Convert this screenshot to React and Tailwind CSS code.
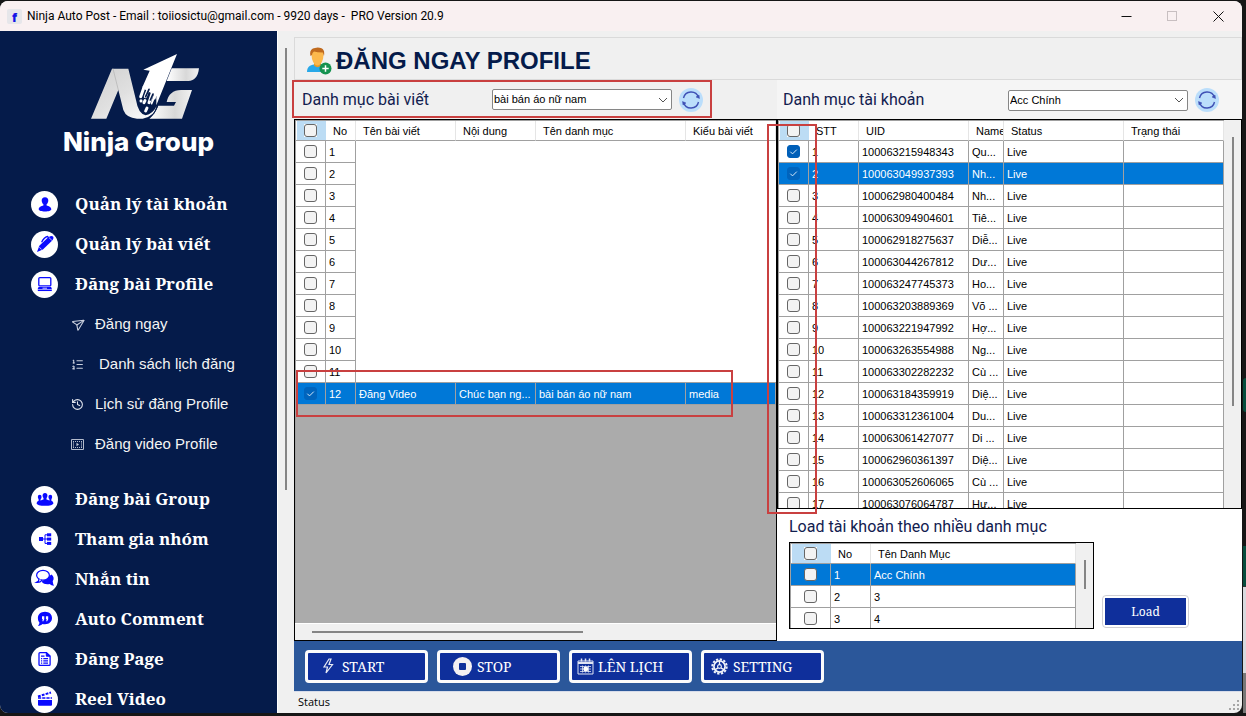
import React from 'react';
import { Send, ListOrdered, History } from 'lucide-react';

const posts = Array.from({ length: 11 }, (_, i) => i + 1);

const accounts = [
  ['100063215948343', 'Qu...', true],
  ['100063049937393', 'Nh...', true],
  ['100062980400484', 'Nh...'],
  ['100063094904601', 'Tiê...'],
  ['100062918275637', 'Diễ...'],
  ['100063044267812', 'Dư...'],
  ['100063247745373', 'Ho...'],
  ['100063203889369', 'Võ ...'],
  ['100063221947992', 'Hợ...'],
  ['100063263554988', 'Ng...'],
  ['100063302282232', 'Cù ...'],
  ['100063184359919', 'Diệ...'],
  ['100063312361004', 'Du...'],
  ['100063061427077', 'Di ...'],
  ['100062960361397', 'Diệ...'],
  ['100063052606065', 'Cù ...'],
  ['100063076064787', 'Hư...'],
];

const UI = "font-['Liberation_Sans',Arial,sans-serif]";

function Check({ label, checked = false, faint = false }) {
  return (
    <span className="grid size-[13px] place-items-center">
      <input
        type="checkbox"
        aria-label={label}
        defaultChecked={checked}
        className={
          'peer col-start-1 row-start-1 size-[13px] appearance-none rounded-[3px] border bg-[#f3f3f3] ' +
          (faint
            ? 'border-[#0062b8] checked:border-[#0064bd] checked:bg-[#0064bd]'
            : 'border-[#666666] checked:border-[#005fb8] checked:bg-[#005fb8]')
        }
      />
      <svg viewBox="0 0 13 13" className="pointer-events-none invisible col-start-1 row-start-1 size-[13px] peer-checked:visible" fill="none" stroke="#d6e8f8">
        <path d="M3.3 6.7 5.5 8.9 9.8 4.6" />
      </svg>
    </span>
  );
}

function HeadCheck({ label }) {
  return (
    <th className="h-[20px] border-b border-[#a0a0a0] bg-white p-0">
      <div className="ml-px flex h-[19px] items-center justify-center bg-[#bcdcf4] pr-[2px]">
        <span className="bg-white"><Check label={label} /></span>
      </div>
    </th>
  );
}

function Th({ children }) {
  return (
    <th className="h-[20px] overflow-hidden border-r border-b border-r-[#e5e5e5] border-b-[#a0a0a0] bg-white p-0 pl-[7px] text-left font-normal">
      {children}
    </th>
  );
}

function Td({ children, className = '' }) {
  return (
    <td className={'h-[22px] overflow-hidden border-r border-b border-[#a0a0a0] p-0 pl-[3px] ' + className}>
      {children}
    </td>
  );
}

function CheckCell(props) {
  return (
    <td className="h-[22px] border-r border-b border-[#a0a0a0] p-0">
      <div className="flex justify-center"><Check {...props} /></div>
    </td>
  );
}

function Combo({ id, value }) {
  return (
    <span className="grid w-[180px] items-center">
      <select id={id} className="col-start-1 row-start-1 h-[21px] appearance-none rounded-[2px] border border-[#868686] bg-white pl-px text-[11px] text-black">
        <option>{value}</option>
      </select>
      <svg viewBox="0 0 10 6" className="pointer-events-none col-start-1 row-start-1 mr-1 h-[6px] w-[10px] justify-self-end" fill="none" stroke="#555">
        <path d="M1 1l4 4 4-4" />
      </svg>
    </span>
  );
}

function Refresh() {
  return (
    <button aria-label="Refresh" className="block size-[24px]">
      <svg viewBox="0 0 48 48" className="size-[24px]">
        <circle cx="24" cy="24" r="24" fill="#bbdefb" />
        <g fill="none" stroke="#3f51b5" strokeWidth="2.8">
          <path d="M9 20a15.500 15.500 0 0 1 30-1" />
          <path d="M39 28a15.500 15.500 0 0 1-30 1" />
        </g>
        <path d="M34 18l7 3-1-7zM14 30l-7-3 1 7z" fill="#3f51b5" stroke="#3f51b5" />
      </svg>
    </button>
  );
}

function Logo() {
  return (
    <svg viewBox="261 156 342 207" className="h-[69px] w-[114px]" aria-hidden="true">
      <defs>
        <linearGradient id="steel" x1="0" y1="0" x2="1" y2="1">
          <stop offset="0" stopColor="#cfcfcf" />
          <stop offset=".5" stopColor="#e0e0e0" />
          <stop offset="1" stopColor="#fff" />
        </linearGradient>
        <linearGradient id="steelG" x1="0" y1="0" x2="1" y2="0">
          <stop offset="0" stopColor="#fff" />
          <stop offset=".6" stopColor="#d8d8d8" />
          <stop offset="1" stopColor="#f2f2f2" />
        </linearGradient>
      </defs>
      <path d="M270 356 333 206H382L405 300Q412 342 434 346Q455 342 467 318Q460 350 425 356H408Q376 354 367 330L352 270 316 356Z" fill="url(#steel)" />
      <path d="M336 206 352 270" fill="none" stroke="#b0b0b0" strokeWidth="2" />
      <path d="M528 162 427 209 446 212 424 262 434 270 466 288 466 316Z" fill="#fff" />
      <g stroke="#fff" strokeWidth="9" strokeLinecap="round">
        <path d="M429 262 419 290M442 266 433 290M455 276 444 308M466 276 454 310M420 302V303M432 302 429 308M438 324 434 333" />
      </g>
      <path d="M444 268 434 290M456 282 448 300M462 300 455 316" stroke="#051b4a" strokeWidth="5" strokeLinecap="round" />
      <path d="M512 205H594Q590 242 562 243H497Z" fill="url(#steelG)" />
      <path d="M540 270H573L543 356H445Q462 342 472 317H519L525 306H497Q504 271 540 270Z" fill="url(#steelG)" />
      <path d="M470 318Q462 342 442 357" fill="none" stroke="#051b4a" strokeWidth="3" />
    </svg>
  );
}

function Disc({ children }) {
  return (
    <svg viewBox="0 0 27 27" className="size-[27px] shrink-0" aria-hidden="true">
      <circle cx="13.5" cy="13.5" r="13.5" fill="#fff" />
      {children}
    </svg>
  );
}

const B = '#0a0aff';

const icons = {
  user: (
    <Disc>
      <path d="M14 6.2c2.200 0 3.400 1.500 3.300 3.500-.1 1.500-.8 2.800-1.700 3.600v1.300c2 .6 4.700 1.500 4.700 3.700 0 1.400-2.800 2.200-6.300 2.200s-6.300-.8-6.300-2.200c0-2.200 2.700-3.100 4.700-3.700v-1.300c-.9-.8-1.600-2.100-1.700-3.600-.1-2 1.100-3.500 3.300-3.500z" fill={B} />
    </Disc>
  ),
  pen: (
    <Disc>
      <path d="M17.300 6.200 21 9.800 11.900 18.500 6 21 8.300 14.800Z" fill={B} />
      <path d="M17.800 6Q20.800 4.300 22 5.600T21.300 9.500Z" fill={B} />
      <path d="M10.600 11.200Q13 6.300 16.400 5.500L17.800 6.800" fill="none" stroke={B} strokeWidth="1.300" />
      <path d="M8.300 16.200 10.600 18.400" stroke="#fff" strokeWidth=".7" />
    </Disc>
  ),
  laptop: (
    <Disc>
      <rect x="7.800" y="6.600" width="12" height="8.300" rx="1" fill="none" stroke={B} strokeWidth="1.300" />
      <path d="M7.500 16H20.100L21 18.200H6.600Z" fill={B} />
      <path d="M11.500 17.200H16" stroke="#fff" strokeWidth=".8" />
      <path d="M6.800 19.400H20.800" stroke={B} strokeWidth="1.300" />
    </Disc>
  ),
  group: (
    <Disc>
      <g fill={B}>
        <ellipse cx="14" cy="9.600" rx="2.400" ry="2.700" />
        <ellipse cx="8.700" cy="11" rx="1.900" ry="2.200" />
        <ellipse cx="19.300" cy="11" rx="1.900" ry="2.200" />
        <path d="M12.500 11h3v2.400q2.200.3 2.900 1.300v-2h2v2q2 .5 2 2.500c0 1.600-3.600 2.600-8.400 2.600s-8.400-1-8.400-2.600q0-2 2-2.500v-2h2v2q.700-1 2.900-1.300z" />
      </g>
    </Disc>
  ),
  tree: (
    <Disc>
      <g fill={B}>
        <rect x="8" y="11" width="4" height="4" />
        <rect x="16" y="7.300" width="4.200" height="3" />
        <rect x="16" y="11.600" width="4.200" height="3" />
        <rect x="16" y="15.900" width="4.200" height="3" />
      </g>
      <path d="M16 8.800H14V17.400H16M12 13H16" fill="none" stroke={B} />
    </Disc>
  ),
  chat: (
    <Disc>
      <path d="M20.500 8.500q3.600 3 1.200 6.700.2 2.400 1.300 4.600-2.700-.2-4.400-1.700-5.200 1-8.200-2.300z" fill={B} />
      <ellipse cx="12" cy="9.300" rx="6.400" ry="4.900" fill="#fff" stroke={B} strokeWidth="1.200" />
      <path d="M8 13Q8 15.500 5.500 16.400 9 17 11 14.200" fill="#fff" stroke={B} strokeWidth="1.200" />
    </Disc>
  ),
  quote: (
    <Disc>
      <path d="M14 5.800c4.400 0 7 2.800 7 6.200s-2.600 6.200-7 6.200c-.9 0-1.800-.1-2.500-.3-1.100 1-2.600 1.900-4.600 2 .9-1 1.500-2.300 1.500-3.500C7.300 15.300 6.900 13.700 6.900 12c0-3.400 2.700-6.200 7.100-6.200z" fill={B} />
      <path d="M11 10.200h2.300v3l-1.200 2.200-.8-.3.600-1.900H11zM14.900 10.200h2.300v3L16 15.400l-.8-.3.600-1.900h-.9z" fill="#fff" />
    </Disc>
  ),
  doc: (
    <Disc>
      <path d="M8 7.500Q8 6.600 9 6.600H15.500L19.100 10V18.500Q19.100 19.400 18.200 19.400H9Q8 19.400 8 18.500Z" fill="none" stroke={B} strokeWidth="1.300" />
      <path d="M15.300 6.600V10.200H19" fill={B} stroke={B} />
      <path d="M10 10.200H13.500M10 12.700H11.200M12.300 12.700H17M10 14.900H11.200M12.300 14.900H17M10 17.100H11.200M12.300 17.100H17" stroke={B} strokeWidth="1.200" />
    </Disc>
  ),
  clap: (
    <Disc>
      <path d="M7 13.900H21V18.700Q21 19.800 20 19.800H8Q7 19.800 7 18.700Z" fill={B} />
      <path d="M7 12.100H21" stroke={B} strokeWidth="1.500" strokeDasharray="3.200 1" />
      <path d="M7 10.500 20 6.500" stroke={B} strokeWidth="2" strokeDasharray="2.800 1.200" />
    </Disc>
  ),
};

function NavItem({ icon, children }) {
  return (
    <a href="#" className="flex h-[40px] items-center gap-[17px] pl-[31px] font-['Noto_Serif','DejaVu_Serif_Condensed','DejaVu_Serif',serif] text-[17px] font-bold whitespace-nowrap text-white">
      {icons[icon]}
      {children}
    </a>
  );
}

function SubItem({ icon, children }) {
  return (
    <a href="#" className="flex h-[40px] items-center gap-[11px] pl-[71px] text-[15px] whitespace-nowrap text-[#f4f4f4]">
      {icon}
      {children}
    </a>
  );
}

function FilmIcon() {
  return (
    <svg viewBox="0 0 13 11" className="h-[11px] w-[13px]" fill="none" stroke="#b4bccd">
      <path d="M.5.5h12v10H.5z" />
      <path d="M2 2.500h9M2 8.500h9" strokeDasharray="1 1" />
      <path d="M2.500 2v7M10.500 2v7" strokeWidth=".6" />
      <path d="M5.500 3.800v3.400L8 5.500z" fill="#c9cfdd" stroke="none" />
    </svg>
  );
}

function Tool({ icon, pad, children }) {
  return (
    <button className={'flex h-[33px] w-[123px] items-center rounded-[4px] border-[3px] border-[#fbfbfb] bg-[#0f2f9b] font-["Noto_Serif","DejaVu_Serif_Condensed","DejaVu_Serif",serif] text-[14px] whitespace-nowrap text-white ' + pad}>
      {icon}
      {children}
    </button>
  );
}

export default function App() {
  return (
    <div className={'flex h-screen bg-[#161616] pt-px pb-[3px] ' + UI}>
      <div className="flex min-w-0 flex-1 flex-col overflow-hidden rounded-lg bg-[#f0f0f0]">
        <header className="flex h-[30px] shrink-0 items-center bg-[#f9f0f1] pl-[7px]">
          <span className="grid size-[15px] place-items-center rounded-[2px] bg-[#e6e6ea] font-['Open_Sans',sans-serif] text-[12px] font-extrabold text-[#1414e6]">f</span>
          <h1 className="ml-[5px] font-['Roboto','Noto_Sans',sans-serif] text-[12px] whitespace-pre text-black">Ninja Auto Post - Email : toiiosictu@gmail.com - 9920 days -  PRO Version 20.9</h1>
          <div className="ml-auto flex items-center gap-[35px] pr-[18px]">
            <button aria-label="Minimize" className="grid size-[11px] place-items-center"><svg viewBox="0 0 11 11" className="size-[11px]" stroke="#111"><path d="M.5 5.500h10" /></svg></button>
            <button aria-label="Maximize" className="grid size-[11px] place-items-center"><svg viewBox="0 0 11 11" className="size-[11px]" fill="none" stroke="#c8bfc1"><rect x=".5" y=".5" width="9" height="9" /></svg></button>
            <button aria-label="Close" className="grid size-[11px] place-items-center"><svg viewBox="0 0 11 11" className="size-[11px]" stroke="#111"><path d="M.5.5l10 10M10.500.5l-10 10" /></svg></button>
          </div>
        </header>

        <div className="flex min-h-0 flex-1">
          <nav className="w-[277px] shrink-0 overflow-hidden bg-[#051b4a]">
            <div className="flex h-[153px] flex-col items-center pt-[21px]">
              <div className="pl-[12px]"><Logo /></div>
              <div className="mt-[3px] font-['Inter',sans-serif] text-[26px] leading-[36px] font-extrabold text-white">Ninja Group</div>
            </div>
            <NavItem icon="user">Quản lý tài khoản</NavItem>
            <NavItem icon="pen">Quản lý bài viết</NavItem>
            <NavItem icon="laptop">Đăng bài Profile</NavItem>
            <SubItem icon={<Send className="size-[13px] rotate-12 text-[#c9cfdd]" strokeWidth={2} />}>Đăng ngay</SubItem>
            <SubItem icon={<ListOrdered className="mr-1 size-[13px] text-[#c9cfdd]" strokeWidth={2} />}>Danh sách lịch đăng</SubItem>
            <SubItem icon={<History className="size-[13px] text-[#e3e6ee]" strokeWidth={2} />}>Lịch sử đăng Profile</SubItem>
            <SubItem icon={<FilmIcon />}>Đăng video Profile</SubItem>
            <div className="mt-[15px]">
              <NavItem icon="group">Đăng bài Group</NavItem>
              <NavItem icon="tree">Tham gia nhóm</NavItem>
              <NavItem icon="chat">Nhắn tin</NavItem>
              <NavItem icon="quote">Auto Comment</NavItem>
              <NavItem icon="doc">Đăng Page</NavItem>
              <NavItem icon="clap">Reel Video</NavItem>
            </div>
          </nav>
          <div className="w-[17px] shrink-0 border-l border-white pt-[17px] pl-[7px]">
            <div className="h-[442px] w-[2px] bg-[#858585]" />
          </div>

          <main className="flex min-w-0 flex-1 flex-col pt-[6px]">
            <div className="flex h-[43px] shrink-0 items-center border border-[#dadada] pl-[11px]">
              <svg viewBox="0 0 26 28" className="mt-1 h-[28px] w-[26px]" aria-hidden="true">
                <path d="M1 25c0-5 3-7 7-7.500h7c4 .5 6 3 6 7.500z" fill="#29a8e8" />
                <path d="M8 14h7v4.500q-3.500 3.500-7 0z" fill="#e59a28" />
                <path d="M5.500 7.500Q5.500 3 11.500 3T17.500 8L17 12Q15 18.500 11.500 18.500T6 12Z" fill="#fcb84c" />
                <path d="M4.500 9Q2.800 2 9 1Q12-.2 15.500 1.300T18 9L16.800 5.500Q11 5.500 8 4.500 6 5.500 6 8Z" fill="#c06a1e" />
                <circle cx="19.500" cy="21.500" r="6" fill="#15924f" />
                <path d="M19.500 18.300v6.400M16.300 21.500h6.400" stroke="#fff" strokeWidth="1.500" />
              </svg>
              <h2 className="mt-1 ml-[4px] text-[24px] leading-[28px] font-bold text-[#051b4a]">ĐĂNG NGAY PROFILE</h2>
            </div>

            <div className="flex min-h-0 flex-1">
              <section className="flex w-[483px] shrink-0 flex-col">
                <div className="relative flex h-[39px] shrink-0 items-center pl-[8px]">
                  <label htmlFor="post-cat" className="w-[190px] font-['Roboto','Liberation_Sans',sans-serif] text-[16px] text-[#12204f]">Danh mục bài viết</label>
                  <Combo id="post-cat" value="bài bán áo nữ nam" />
                  <div className="ml-[7px]"><Refresh /></div>
                  <div className="pointer-events-none absolute top-0 -left-[2px] z-10 h-[38px] w-[420px] border-2 border-[#c94040]" />
                </div>
                <div className="relative flex min-h-0 flex-1 flex-col border border-black">
                  <div className="min-h-0 flex-1 overflow-hidden border-t border-l border-[#a0a0a0] bg-[#ababab]">
                    <table className="w-full table-fixed border-separate border-spacing-0 text-[11px] leading-[14px] text-black">
                      <colgroup>
                        <col className="w-[30px]" /><col className="w-[30px]" /><col className="w-[100px]" /><col className="w-[80px]" /><col className="w-[150px]" /><col />
                      </colgroup>
                      <thead>
                        <tr>
                          <HeadCheck label="Select all posts" />
                          <Th>No</Th><Th>Tên bài viết</Th><Th>Nội dung</Th><Th>Tên danh mục</Th><Th>Kiểu bài viết</Th>
                        </tr>
                      </thead>
                      <tbody>
                        {posts.map((n) => (
                          <tr key={n} className="bg-white">
                            <CheckCell label={'Post ' + n} />
                            <Td>{n}</Td>
                            {n === 1 && <td colSpan={4} rowSpan={11} className="border-b border-[#a0a0a0] bg-white p-0" />}
                          </tr>
                        ))}
                        <tr className="bg-[#0078d7] text-white">
                          <CheckCell label="Post 12" checked faint />
                          <Td>12</Td><Td>Đăng Video</Td><Td>Chúc bạn ng...</Td><Td>bài bán áo nữ nam</Td><Td>media</Td>
                        </tr>
                      </tbody>
                    </table>
                  </div>
                  <div className="flex h-[17px] shrink-0 items-center border-t border-white bg-[#f0f0f0] pl-[17px]">
                    <div className="h-[2px] w-[271px] bg-[#858585]" />
                  </div>
                  <div className="pointer-events-none absolute top-[250px] left-px z-10 h-[47px] w-[437px] border-2 border-[#c94040]" />
                </div>
              </section>

              <section className="flex min-w-0 flex-1 flex-col bg-white">
                <div className="flex h-[39px] shrink-0 items-center bg-[#f5f5f5] pt-px pr-[23px] pl-[6px]">
                  <label htmlFor="acc-cat" className="mr-auto font-['Roboto','Liberation_Sans',sans-serif] text-[16px] text-[#12204f]">Danh mục tài khoản</label>
                  <Combo id="acc-cat" value="Acc Chính" />
                  <div className="ml-[7px]"><Refresh /></div>
                </div>
                <div className="relative flex min-h-0 flex-1">
                  <div className="flex min-w-0 flex-1 overflow-hidden border border-black">
                    <div className="min-w-0 flex-1 border-t border-l border-[#a0a0a0]">
                      <table className="w-full table-fixed border-separate border-spacing-0 text-[11px] leading-[14px] text-black">
                        <colgroup>
                          <col className="w-[30px]" /><col className="w-[50px]" /><col className="w-[110px]" /><col className="w-[35px]" /><col className="w-[120px]" /><col />
                        </colgroup>
                        <thead>
                          <tr>
                            <HeadCheck label="Select all accounts" />
                            <Th>STT</Th><Th>UID</Th><Th>Name</Th><Th>Status</Th><Th>Trạng thái</Th>
                          </tr>
                        </thead>
                        <tbody>
                          {accounts.map(([uid, name, on], i) => (
                            <tr key={uid} className={i === 1 ? 'bg-[#0078d7] text-white' : 'bg-white'}>
                              <CheckCell label={'Account ' + (i + 1)} checked={!!on} faint={i === 1} />
                              <Td>{i + 1}</Td><Td>{uid}</Td><Td className="whitespace-nowrap">{name}</Td><Td>Live</Td><Td />
                            </tr>
                          ))}
                        </tbody>
                      </table>
                    </div>
                    <div className="w-[17px] shrink-0 bg-[#f0f0f0] pt-[17px] pl-[8px]">
                      <div className="h-[269px] w-[2px] bg-[#858585]" />
                    </div>
                  </div>
                  <div className="pointer-events-none absolute top-[5px] -left-[10px] z-10 h-[390px] w-[50px] border-2 border-[#c94040]" />
                </div>
                <div className="shrink-0 pt-[6px] pb-[12px] pl-[12px]">
                  <h3 className="h-[27px] font-['Roboto','Liberation_Sans',sans-serif] text-[16px] leading-[24px] text-[#12204f]">Load tài khoản theo nhiều danh mục</h3>
                  <div className="flex items-end gap-[8px]">
                    <div className="flex h-[87px] w-[305px] overflow-hidden border border-black">
                      <div className="flex-1 border-t border-l border-[#a0a0a0]">
                        <table className="w-full table-fixed border-separate border-spacing-0 text-[11px] leading-[14px] text-black">
                          <colgroup><col className="w-[40px]" /><col className="w-[40px]" /><col /></colgroup>
                          <thead>
                            <tr><HeadCheck label="Select all categories" /><Th>No</Th><Th>Tên Danh Mục</Th></tr>
                          </thead>
                          <tbody>
                            {['Acc Chính', '3', '4'].map((c, i) => (
                              <tr key={c} className={i === 0 ? 'bg-[#0078d7] text-white' : 'bg-white'}>
                                <CheckCell label={'Category ' + c} /><Td>{i + 1}</Td><Td>{c}</Td>
                              </tr>
                            ))}
                          </tbody>
                        </table>
                      </div>
                      <div className="w-[17px] shrink-0 bg-[#f0f0f0] pt-[17px] pl-[8px]">
                        <div className="h-[29px] w-[2px] bg-[#858585]" />
                      </div>
                    </div>
                    <button className="mb-px h-[33px] w-[87px] rounded-[4px] border border-[#cfcfd4] bg-white p-[2px]">
                      <span className="flex h-full items-center justify-center bg-[#0f2f9b] font-['Noto_Serif','DejaVu_Serif_Condensed','DejaVu_Serif',serif] text-[12px] text-white">Load</span>
                    </button>
                  </div>
                </div>
              </section>
            </div>

            <div className="flex h-[50px] shrink-0 items-center gap-[9px] bg-[#2b579a] pl-[11px]">
              <Tool pad="pl-[13px] gap-[7px]" icon={<svg viewBox="0 0 14 16" className="h-[16px] w-[14px]" fill="none" stroke="#e8ebf5" strokeWidth="1.200"><path d="M8 1 3 9h3.500L5 15l6.500-8.500H8L10 1z" /></svg>}>START</Tool>
              <Tool pad="pl-[13px] gap-[5px]" icon={<svg viewBox="0 0 19 19" className="size-[19px]"><circle cx="9.500" cy="9.500" r="9.500" fill="#f4f0f2" /><rect x="6" y="6" width="7" height="7" rx="1" fill="#0f2f9b" /></svg>}>STOP</Tool>
              <Tool pad="pl-[5px] gap-[4px]" icon={<svg viewBox="0 0 17 17" className="size-[17px]" fill="none" stroke="#e0e4f2"><path d="M1 3h15v13H1z" /><path d="M1 5h15" strokeWidth="2" /><path d="M4.500.5v3M8.500.5v3M12.500.5v3" strokeWidth="1.500" /><path d="M3 8.500h11M3 11h11M3 13.500h11M5.500 7.500v7M8.500 7.500v7M11.500 7.500v7" strokeWidth=".8" /><path d="M7 9.500h3.500v3H7z" fill="#fff" stroke="#fff" /></svg>}>LÊN LỊCH</Tool>
              <Tool pad="pl-[7px] gap-[5px]" icon={<svg viewBox="0 0 18 18" className="size-[17px]" fill="none" stroke="#f0f2fa"><circle cx="9" cy="9" r="7.600" strokeWidth="2.200" strokeDasharray="2.400 1.580" /><circle cx="9" cy="9" r="5.900" strokeWidth="1.800" /><path d="M9 3v4.500M4 12.500l3.500-2M14 12.500l-3.500-2" strokeWidth="1.400" /><circle cx="9" cy="9" r="2" strokeWidth="1.200" /></svg>}>SETTING</Tool>
            </div>
            <footer className="flex h-[22px] shrink-0 items-center border-t border-[#d7dcea] pr-[2px] pl-[4px] font-['Open_Sans','Noto_Sans',sans-serif] text-[11px] text-black">
              Status
              <svg viewBox="0 0 12 12" className="mt-1 ml-auto size-[12px]" fill="#a6a6a6"><path d="M9 1h2v2H9zM5 5h2v2H5zM9 5h2v2H9zM1 9h2v2H1zM5 9h2v2H5zM9 9h2v2H9z" /></svg>
            </footer>
          </main>
        </div>
      </div>
      <aside className="flex w-[4px] shrink-0 flex-col pl-px" aria-hidden="true">
        <div className="h-[377px]" />
        <div className="h-[34px] rounded-l-full bg-[#064d3d]" />
        <div className="h-[134px]" />
        <div className="h-[40px] bg-[#064d3d]" />
        <div className="h-[87px] border-t border-[#333] bg-[#d8dade]" />
        <div className="flex-1 bg-[#777]" />
      </aside>
    </div>
  );
}
